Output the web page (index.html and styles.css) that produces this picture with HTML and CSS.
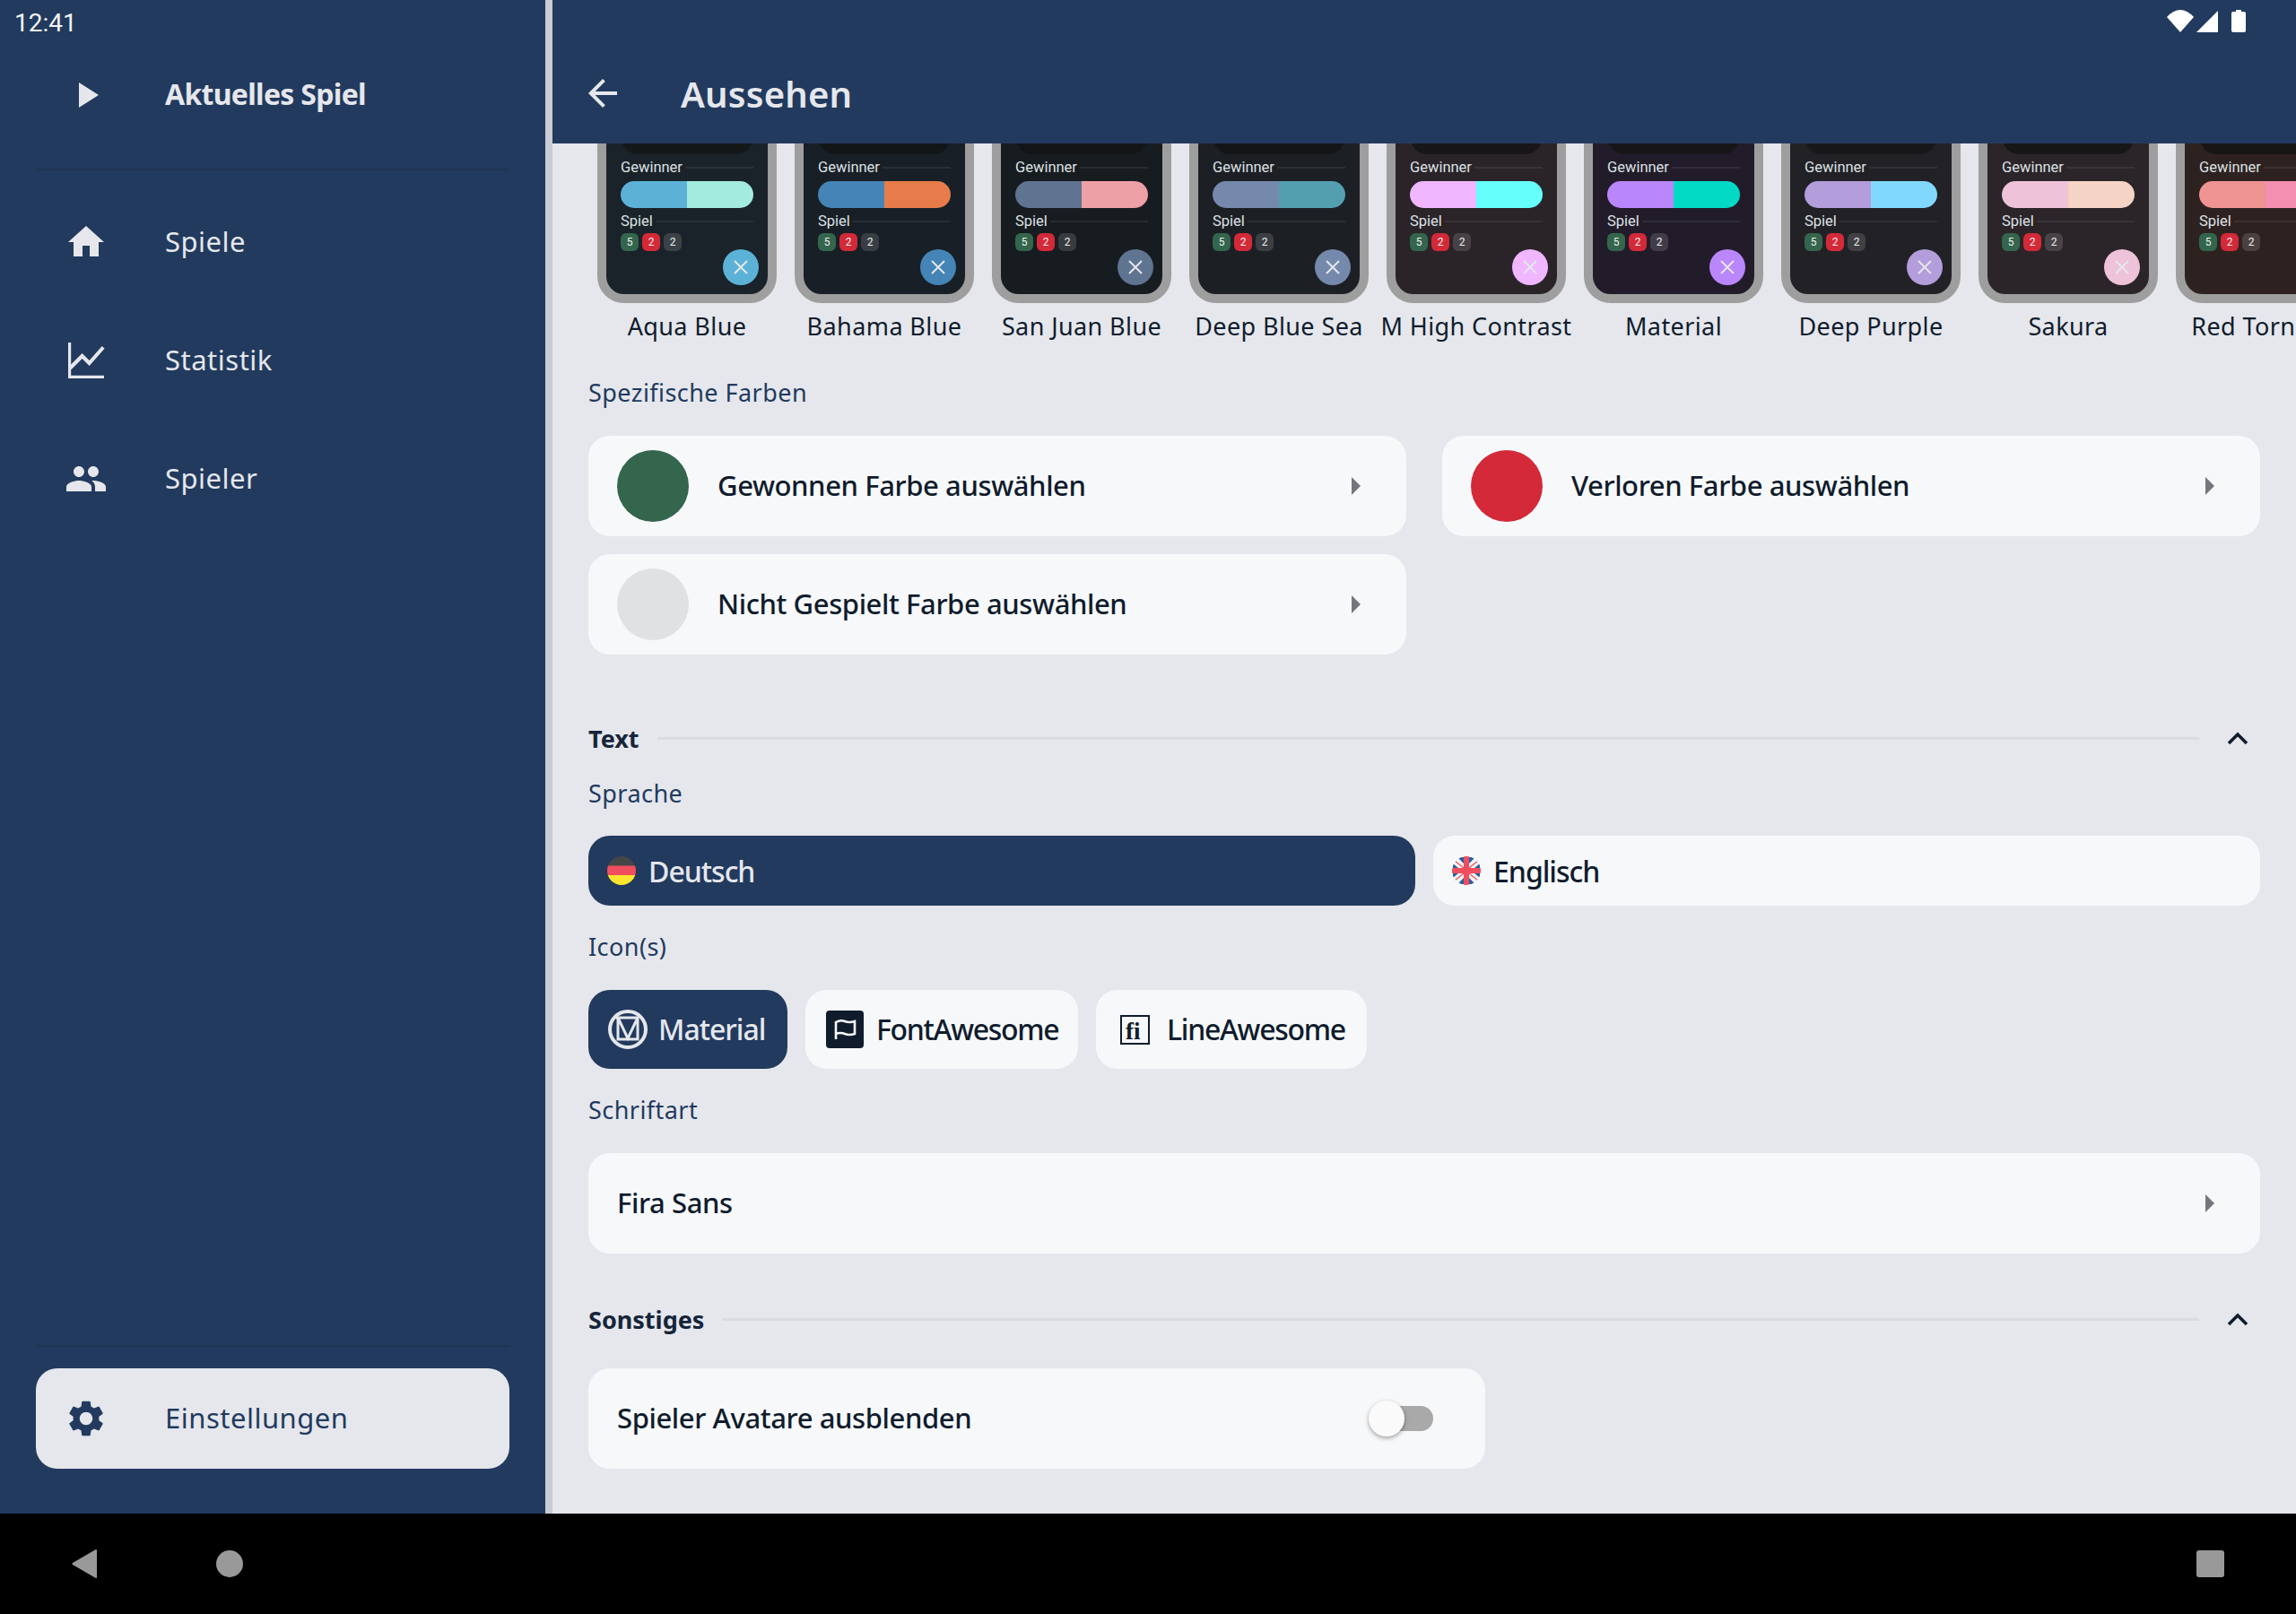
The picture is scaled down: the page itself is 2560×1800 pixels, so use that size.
FILE: index.html
```html
<!DOCTYPE html>
<html lang="de">

<head>
    <meta charset="UTF-8">
    <meta name="viewport" content="width=device-width, initial-scale=1.0">
    <title>Aussehen</title>

    <link rel="stylesheet" href="styles.css">
</head>

<body>
    <div class="app">
        <div class="main">
            <aside class="sidebar">
                <div class="time">12:41</div>
                <div class="nav-item nav-current">
                    <svg class="nav-icon play-icon" viewBox="0 0 22 28"><path d="M0 0 L22 14 L0 28 Z"/></svg>
                    <span>Aktuelles Spiel</span>
                </div>
                <div class="side-line first-line"></div>
                <div class="nav-item">
                    <svg class="nav-icon" viewBox="0 0 24 24"><path d="M10 20v-6h4v6h5v-8h3L12 3 2 12h3v8z"/></svg>
                    <span>Spiele</span>
                </div>
                <div class="nav-item">
                    <svg class="nav-icon" viewBox="0 0 24 24"><path d="M3.5 18.49l6-6.01 4 4L22 6.92l-1.41-1.41-7.09 7.97-4-4L2 16.99z" transform="translate(.3 -1.5)"/><path d="M2 2h1.6v18.4H22V22H2z"/></svg>
                    <span>Statistik</span>
                </div>
                <div class="nav-item">
                    <svg class="nav-icon" viewBox="0 0 24 24"><path d="M16 11c1.66 0 2.99-1.34 2.99-3S17.66 5 16 5c-1.66 0-3 1.34-3 3s1.34 3 3 3zm-8 0c1.66 0 2.99-1.34 2.99-3S9.66 5 8 5C6.34 5 5 6.34 5 8s1.34 3 3 3zm0 2c-2.33 0-7 1.17-7 3.5V19h14v-2.5c0-2.33-4.67-3.5-7-3.5zm8 0c-.29 0-.62.02-.97.05 1.16.84 1.97 1.97 1.97 3.45V19h6v-2.5c0-2.33-4.67-3.5-7-3.5z"/></svg>
                    <span>Spieler</span>
                </div>
                <div class="side-spacer"></div>
                <div class="side-line"></div>
                <div class="nav-item nav-settings">
                    <svg class="nav-icon" viewBox="0 0 24 24"><path d="M19.14 12.94c.04-.3.06-.61.06-.94 0-.32-.02-.64-.07-.94l2.03-1.58c.18-.14.23-.41.12-.61l-1.92-3.32c-.12-.22-.37-.29-.59-.22l-2.39.96c-.5-.38-1.03-.7-1.62-.94l-.36-2.54c-.04-.24-.24-.41-.48-.41h-3.84c-.24 0-.43.17-.47.41l-.36 2.54c-.59.24-1.13.57-1.62.94l-2.39-.96c-.22-.08-.47 0-.59.22L2.74 8.87c-.12.21-.08.47.12.61l2.03 1.58c-.05.3-.09.63-.09.94s.02.64.07.94l-2.03 1.58c-.18.14-.23.41-.12.61l1.92 3.32c.12.22.37.29.59.22l2.39-.96c.5.38 1.03.7 1.62.94l.36 2.54c.05.24.24.41.48.41h3.84c.24 0 .44-.17.47-.41l.36-2.54c.59-.24 1.13-.56 1.62-.94l2.39.96c.22.08.47 0 .59-.22l1.92-3.32c.12-.22.07-.47-.12-.61l-2.01-1.58zM12 15.6c-1.98 0-3.6-1.62-3.6-3.6s1.62-3.6 3.6-3.6 3.6 1.62 3.6 3.6-1.62 3.6-3.6 3.6z"/></svg>
                    <span>Einstellungen</span>
                </div>
            </aside>

            <div class="page">
                <header class="topbar">
                    <div class="status-icons">
                        <svg class="wifi" viewBox="0 0 30 25"><path d="M15 25 L0 8 Q15 -8 30 8 Z"/></svg>
                        <svg class="signal" viewBox="0 0 24 24"><path d="M24 0 V24 H0 Z"/></svg>
                        <svg class="battery" viewBox="0 0 16 25"><path d="M5 0 H11 V2 H14 Q16 2 16 4 V23 Q16 25 14 25 H2 Q0 25 0 23 V4 Q0 2 2 2 H5 Z"/></svg>
                    </div>
                    <div class="toolbar">
                        <svg class="back-arrow" viewBox="0 0 24 24"><path d="M20 11H7.83l5.59-5.59L12 4l-8 8 8 8 1.41-1.41L7.83 13H20z"/></svg>
                        <h1>Aussehen</h1>
                    </div>
                </header>

                <div class="content">
                    <div class="theme-strip" id="themes"></div>

                    <div class="sub-label">Spezifische Farben</div>
                    <div class="card-grid">
                        <div class="card">
                            <div class="swatch swatch-won"></div>
                            <span class="card-text">Gewonnen Farbe auswählen</span>
                            <span class="caret"></span>
                        </div>
                        <div class="card">
                            <div class="swatch swatch-lost"></div>
                            <span class="card-text">Verloren Farbe auswählen</span>
                            <span class="caret"></span>
                        </div>
                        <div class="card">
                            <div class="swatch swatch-none"></div>
                            <span class="card-text">Nicht Gespielt Farbe auswählen</span>
                            <span class="caret"></span>
                        </div>
                    </div>

                    <div class="section-head head-text">
                        <span>Text</span>
                        <div class="section-line"></div>
                        <svg class="collapse" viewBox="0 0 24 16"><path d="M2 14 L12 4 L22 14" /></svg>
                    </div>
                    <div class="sub-label label-lang">Sprache</div>
                    <div class="lang-row">
                        <div class="choice choice-on lang">
                            <svg class="flag" viewBox="0 0 32 32">
                                <clipPath id="flag-de"><circle cx="16" cy="16" r="16"/></clipPath>
                                <g clip-path="url(#flag-de)">
                                    <rect width="32" height="11" fill="#464646"/>
                                    <rect y="10.5" width="32" height="11" fill="#f04e5e"/>
                                    <rect y="21" width="32" height="11" fill="#ffe62e"/>
                                </g>
                            </svg>
                            <span>Deutsch</span>
                        </div>
                        <div class="choice lang">
                            <svg class="flag" viewBox="0 0 32 32">
                                <clipPath id="flag-en"><circle cx="16" cy="16" r="16"/></clipPath>
                                <g clip-path="url(#flag-en)">
                                    <rect width="32" height="32" fill="#f5f5f5"/>
                                    <path d="M6 1 L13 1 L13 8 Z M19 1 L26 1 L19 8 Z M6 31 L13 31 L13 24 Z M19 31 L26 31 L19 24 Z M1 8 L7 13 L1 13 Z M31 8 L25 13 L31 13 Z M1 24 L7 19 L1 19 Z M31 24 L25 19 L31 19 Z" fill="#2a5f9e"/>
                                    <path d="M3 5 L13 13 M29 5 L19 13 M3 27 L13 19 M29 27 L19 19" stroke="#f04e5e" stroke-width="1.2"/>
                                    <rect x="13" width="6" height="32" fill="#f04e5e"/>
                                    <rect y="13" width="32" height="6" fill="#f04e5e"/>
                                </g>
                            </svg>
                            <span>Englisch</span>
                        </div>
                    </div>

                    <div class="sub-label label-icons">Icon(s)</div>
                    <div class="icon-row">
                        <div class="choice choice-on icon-choice pack-material">
                            <svg class="pack-icon" viewBox="0 0 44 44" fill="none" stroke="#e5e7ec" stroke-width="3">
                                <circle cx="22" cy="22" r="20" stroke-width="4"/>
                                <path d="M11 9 V33 H33 V9 H9 M11 9 L22 32 L33 9"/>
                            </svg>
                            <span>Material</span>
                        </div>
                        <div class="choice icon-choice pack-fa">
                            <svg class="pack-icon" viewBox="0 0 42 42">
                                <rect width="42" height="42" rx="4" fill="#101c2c"/>
                                <path d="M11 32 V13 Q16 10 21 12 Q26 14 32 12 V26 Q26 28 21 26 Q16 24 11 26" fill="none" stroke="#f6f8fa" stroke-width="2.6"/>
                            </svg>
                            <span>FontAwesome</span>
                        </div>
                        <div class="choice icon-choice pack-la">
                            <svg class="pack-icon" viewBox="0 0 33 33">
                                <rect x="1" y="1" width="31" height="31" fill="none" stroke="#101c2c" stroke-width="2"/>
                                <text x="6" y="27" class="la-text">fi</text>
                            </svg>
                            <span>LineAwesome</span>
                        </div>
                    </div>

                    <div class="sub-label label-font">Schriftart</div>
                    <div class="card card-wide">
                        <span class="card-text">Fira Sans</span>
                        <span class="caret"></span>
                    </div>

                    <div class="section-head head-misc">
                        <span>Sonstiges</span>
                        <div class="section-line"></div>
                        <svg class="collapse" viewBox="0 0 24 16"><path d="M2 14 L12 4 L22 14" /></svg>
                    </div>
                    <div class="card card-toggle">
                        <span class="card-text">Spieler Avatare ausblenden</span>
                        <div class="switch"><div class="switch-thumb"></div></div>
                    </div>
                </div>
            </div>
        </div>

        <footer class="navbar">
            <svg class="nav-back" viewBox="0 0 28 32"><path d="M28 1 V31 Q28 32.500 26 31.500 L1 17 Q0 16 1 15 L26 .500 Q28 -.500 28 1 Z"/></svg>
            <div class="nav-home"></div>
            <div class="navbar-spacer"></div>
            <div class="nav-recent"></div>
        </footer>
    </div>

    <script>
        // name, screen, notch, left colour, right colour
        const themes = [
            ['Aqua Blue', '#1a2329', '#141819', '#5bb2d6', '#a2ebde'],
            ['Bahama Blue', '#181f26', '#131618', '#4484b6', '#e67c49'],
            ['San Juan Blue', '#171c20', '#131517', '#5e7491', '#eda0a5'],
            ['Deep Blue Sea', '#1c2025', '#141517', '#7489ab', '#539fb0'],
            ['M High Contrast', '#2a2429', '#181618', '#f0b6ff', '#65fffc'],
            ['Material', '#221c2a', '#171518', '#ba86fb', '#03dac6'],
            ['Deep Purple', '#222126', '#18181a', '#b39ddb', '#80d8ff'],
            ['Sakura', '#2b2529', '#181717', '#eec2d8', '#f5d4c5'],
            ['Red Tornado', '#2e2220', '#181515', '#ef9493', '#f48fb1']
        ];

        let html = '';
        for (let i = 0; i < themes.length; i++) {
            let t = themes[i];
            html += `
            <div class="theme">
                <div class="phone" style="background-color: ${t[1]}">
                    <div class="notch" style="background-color: ${t[2]}"></div>
                    <div class="mini-head"><span>Gewinner</span><i></i></div>
                    <div class="mini-bar">
                        <div style="background-color: ${t[3]}"></div>
                        <div style="background-color: ${t[4]}"></div>
                    </div>
                    <div class="mini-head"><span>Spiel</span><i></i></div>
                    <div class="chips">
                        <span class="chip chip-won">5</span>
                        <span class="chip chip-lost">2</span>
                        <span class="chip chip-none">2</span>
                    </div>
                    <div class="mini-fab" style="background-color: ${t[3]}">
                        <svg viewBox="0 0 20 20"><path d="M3 3 L17 17 M17 3 L3 17"/></svg>
                    </div>
                </div>
                <div class="theme-name">${t[0]}</div>
            </div>`;
        }
        document.getElementById('themes').innerHTML = html;
    </script>
</body>

</html>
```

FILE: styles.css
```css
* {
    box-sizing: border-box;
}

body {
    margin: 0;
    font-family: "Noto Sans", "Open Sans", sans-serif;
    color: #101c2c;
    background-color: #e5e7ec;
}

.app {
    width: 2560px;
    height: 1800px;
    display: flex;
    flex-direction: column;
    overflow: hidden;
}

.main {
    height: 1688px;
    display: flex;
}

/* sidebar */
.sidebar {
    width: 608px;
    flex-shrink: 0;
    display: flex;
    flex-direction: column;
    background-color: #223a5e;
    color: #e5e7ec;
    padding-bottom: 50px;
}

.time {
    height: 50px;
    padding: 9px 0 0 16px;
    font-family: Roboto, sans-serif;
    font-size: 28px;
    line-height: 34px;
    color: #f2f3f5;
}

.nav-item {
    height: 112px;
    margin: 0 40px 20px;
    padding-left: 32px;
    display: flex;
    align-items: center;
    font-size: 31px;
    letter-spacing: 0.5px;
    border-radius: 24px;
}

.nav-item span {
    margin: 0 0 2px 64px;
}

.nav-icon {
    width: 48px;
    height: 48px;
    flex-shrink: 0;
    fill: currentColor;
}

.nav-current {
    margin-bottom: 0;
    font-weight: 700;
    font-size: 32px;
    letter-spacing: -0.7px;
}

.nav-current span {
    margin-bottom: 3px;
}

.play-icon {
    width: 22px;
    height: 28px;
    margin-left: 16px;
    margin-right: 10px;
}

.side-line {
    height: 2px;
    margin: 0 40px;
    background-color: #203552;
    flex-shrink: 0;
}

.first-line {
    margin-top: 26px;
    margin-bottom: 24px;
}

.side-spacer {
    flex: 1;
}

.nav-settings {
    margin-top: 24px;
    margin-bottom: 0;
    background-color: #e5e7ec;
    color: #223a5e;
}

/* right side */
.page {
    flex: 1;
    min-width: 0;
    display: flex;
    flex-direction: column;
    border-left: 8px solid #c9ccd2;
}

.topbar {
    height: 160px;
    flex-shrink: 0;
    background-color: #223a5e;
    color: #e5e7ec;
}

.status-icons {
    height: 48px;
    padding: 11px 56px 0 0;
    display: flex;
    justify-content: flex-end;
    align-items: flex-start;
    fill: #ffffff;
}

.wifi {
    width: 30px;
    height: 25px;
}

.signal {
    width: 24px;
    height: 24px;
    margin: 1px 15px 0 3px;
}

.battery {
    width: 16px;
    height: 25px;
}

.toolbar {
    height: 112px;
    padding-left: 32px;
    display: flex;
    align-items: center;
}

.back-arrow {
    width: 48px;
    height: 48px;
    fill: #e5e7ec;
}

.toolbar h1 {
    margin: 0 0 0 63px;
    font-size: 40px;
    font-weight: 600;
    letter-spacing: 0.2px;
}

.content {
    flex: 1;
    min-height: 0;
    overflow: hidden;
    padding: 0 40px;
}

/* theme previews, the list is scrolled so the tops are cut off */
.theme-strip {
    display: flex;
    margin: -122px -40px 0 0;
}

.theme {
    width: 200px;
    margin: 0 10px;
    flex-shrink: 0;
    display: flex;
    flex-direction: column;
    align-items: center;
}

.phone {
    position: relative;
    width: 200px;
    height: 300px;
    padding: 0 16px;
    border: 10px solid #9e9e9e;
    border-radius: 30px;
    font-family: Roboto, sans-serif;
    color: #dde1e4;
}

.notch {
    height: 124px;
    margin: 0 1px;
    border-radius: 0 0 18px 18px;
}

.mini-head {
    height: 20px;
    margin-top: 5px;
    display: flex;
    align-items: center;
    gap: 3px;
    font-size: 16.5px;
}

.mini-head span {
    margin-bottom: 2px;
}

.mini-head i {
    flex: 1;
    height: 2px;
    background-color: rgba(255, 255, 255, 0.07);
}

.mini-bar {
    display: flex;
    height: 30px;
    margin-top: 5px;
    border-radius: 15px;
    overflow: hidden;
}

.mini-bar div {
    flex: 1;
}

.chips {
    display: flex;
    gap: 4px;
    margin-top: 3px;
}

.chip {
    width: 20px;
    height: 20px;
    border-radius: 6px;
    font-size: 12px;
    line-height: 20px;
    text-align: center;
    color: #f0f0f0;
}

.chip-won {
    background-color: #34654d;
}

.chip-lost {
    background-color: #d32938;
}

.chip-none {
    background-color: rgba(255, 255, 255, 0.14);
}

.mini-fab {
    position: absolute;
    right: 10px;
    bottom: 10px;
    width: 40px;
    height: 40px;
    border-radius: 50%;
    display: flex;
    align-items: center;
    justify-content: center;
}

.mini-fab svg {
    width: 20px;
    height: 20px;
    fill: none;
    stroke: #e5e7ec;
    stroke-width: 2;
}

.theme-name {
    width: 220px;
    margin-top: 3px;
    font-size: 27px;
    line-height: 46px;
    letter-spacing: 0.4px;
    text-align: center;
    white-space: nowrap;
}

/* labels and section headers */
.sub-label {
    font-size: 27px;
    line-height: 40px;
    letter-spacing: 0.45px;
    color: #223a5e;
}

.theme-strip + .sub-label {
    margin-top: 31px;
}

.section-head {
    display: flex;
    align-items: center;
    height: 40px;
    font-size: 27px;
    font-weight: 700;
    color: #16253a;
}

.section-line {
    flex: 1;
    height: 3px;
    margin-left: 20px;
    background-color: #d9dbe0;
}

.collapse {
    width: 24px;
    height: 16px;
    margin: 0 13px 0 31px;
    fill: none;
    stroke: #101c2c;
    stroke-width: 3.6;
}

.head-text {
    margin-top: 73px;
}

.head-misc {
    margin-top: 53px;
}

.label-lang {
    margin-top: 22px;
}

.label-icons {
    margin-top: 26px;
}

.label-font {
    margin-top: 26px;
}

/* cards */
.card-grid {
    display: grid;
    grid-template-columns: 912px 912px;
    gap: 20px 40px;
    margin-top: 28px;
}

.card {
    height: 112px;
    padding: 0 32px;
    display: flex;
    align-items: center;
    background-color: #f6f8fa;
    border-radius: 24px;
}

.card-text {
    flex: 1;
    margin-bottom: 2px;
    font-size: 31px;
    font-weight: 550;
    letter-spacing: -0.4px;
}

.swatch {
    width: 80px;
    height: 80px;
    margin-right: 32px;
    border-radius: 50%;
    flex-shrink: 0;
}

.swatch-won {
    background-color: #34654d;
}

.swatch-lost {
    background-color: #d32938;
}

.swatch-none {
    background-color: #e0e1e2;
}

.caret {
    width: 0;
    height: 0;
    margin-right: 19px;
    border-top: 10px solid transparent;
    border-bottom: 10px solid transparent;
    border-left: 10px solid #73777d;
}

.card-wide {
    margin-top: 28px;
}

.card-toggle {
    width: 1000px;
    margin-top: 35px;
}

.switch {
    position: relative;
    width: 68px;
    height: 28px;
    margin-right: 26px;
    border-radius: 14px;
    background-color: #a8a9a8;
}

.switch-thumb {
    position: absolute;
    left: -4px;
    top: -6px;
    width: 40px;
    height: 40px;
    border-radius: 50%;
    background-color: #fafafa;
    box-shadow: 0 2px 5px rgba(0, 0, 0, 0.35);
}

/* choice buttons */
.lang-row {
    display: grid;
    grid-template-columns: 922px 922px;
    gap: 20px;
    margin-top: 27px;
}

.choice {
    display: flex;
    align-items: center;
    background-color: #f6f8fa;
    border-radius: 24px;
    font-size: 32px;
    font-weight: 550;
    letter-spacing: -1px;
}

.choice-on {
    background-color: #223a5e;
    color: #e5e7ec;
}

.lang {
    height: 78px;
    padding-left: 21px;
}

.flag {
    width: 32px;
    height: 32px;
    margin-right: 14px;
}

.icon-row {
    display: flex;
    gap: 20px;
    margin-top: 28px;
}

.icon-choice {
    height: 88px;
}

.icon-choice span {
    margin-bottom: 2px;
}

.pack-icon {
    flex-shrink: 0;
}

.pack-material {
    width: 222px;
    padding-left: 22px;
}

.pack-material .pack-icon {
    width: 44px;
    height: 44px;
    margin-right: 12px;
}

.pack-fa {
    width: 304px;
    padding-left: 23px;
    letter-spacing: -1.3px;
}

.pack-fa .pack-icon {
    width: 42px;
    height: 42px;
    margin-right: 14px;
}

.pack-la {
    width: 302px;
    padding-left: 27px;
    letter-spacing: -1.3px;
}

.pack-la .pack-icon {
    width: 33px;
    height: 33px;
    margin-right: 19px;
}

.la-text {
    font-family: "Liberation Serif", serif;
    font-size: 27px;
    font-weight: 700;
    letter-spacing: 0;
    fill: #101c2c;
}

/* android buttons */
.navbar {
    height: 112px;
    padding: 0 80px;
    display: flex;
    align-items: center;
    background-color: #000000;
}

.nav-back {
    width: 28px;
    height: 32px;
    fill: #999999;
}

.nav-home {
    width: 30px;
    height: 30px;
    margin-left: 133px;
    border-radius: 50%;
    background-color: #999999;
}

.navbar-spacer {
    flex: 1;
}

.nav-recent {
    width: 31px;
    height: 30px;
    border-radius: 3px;
    background-color: #999999;
}
```
